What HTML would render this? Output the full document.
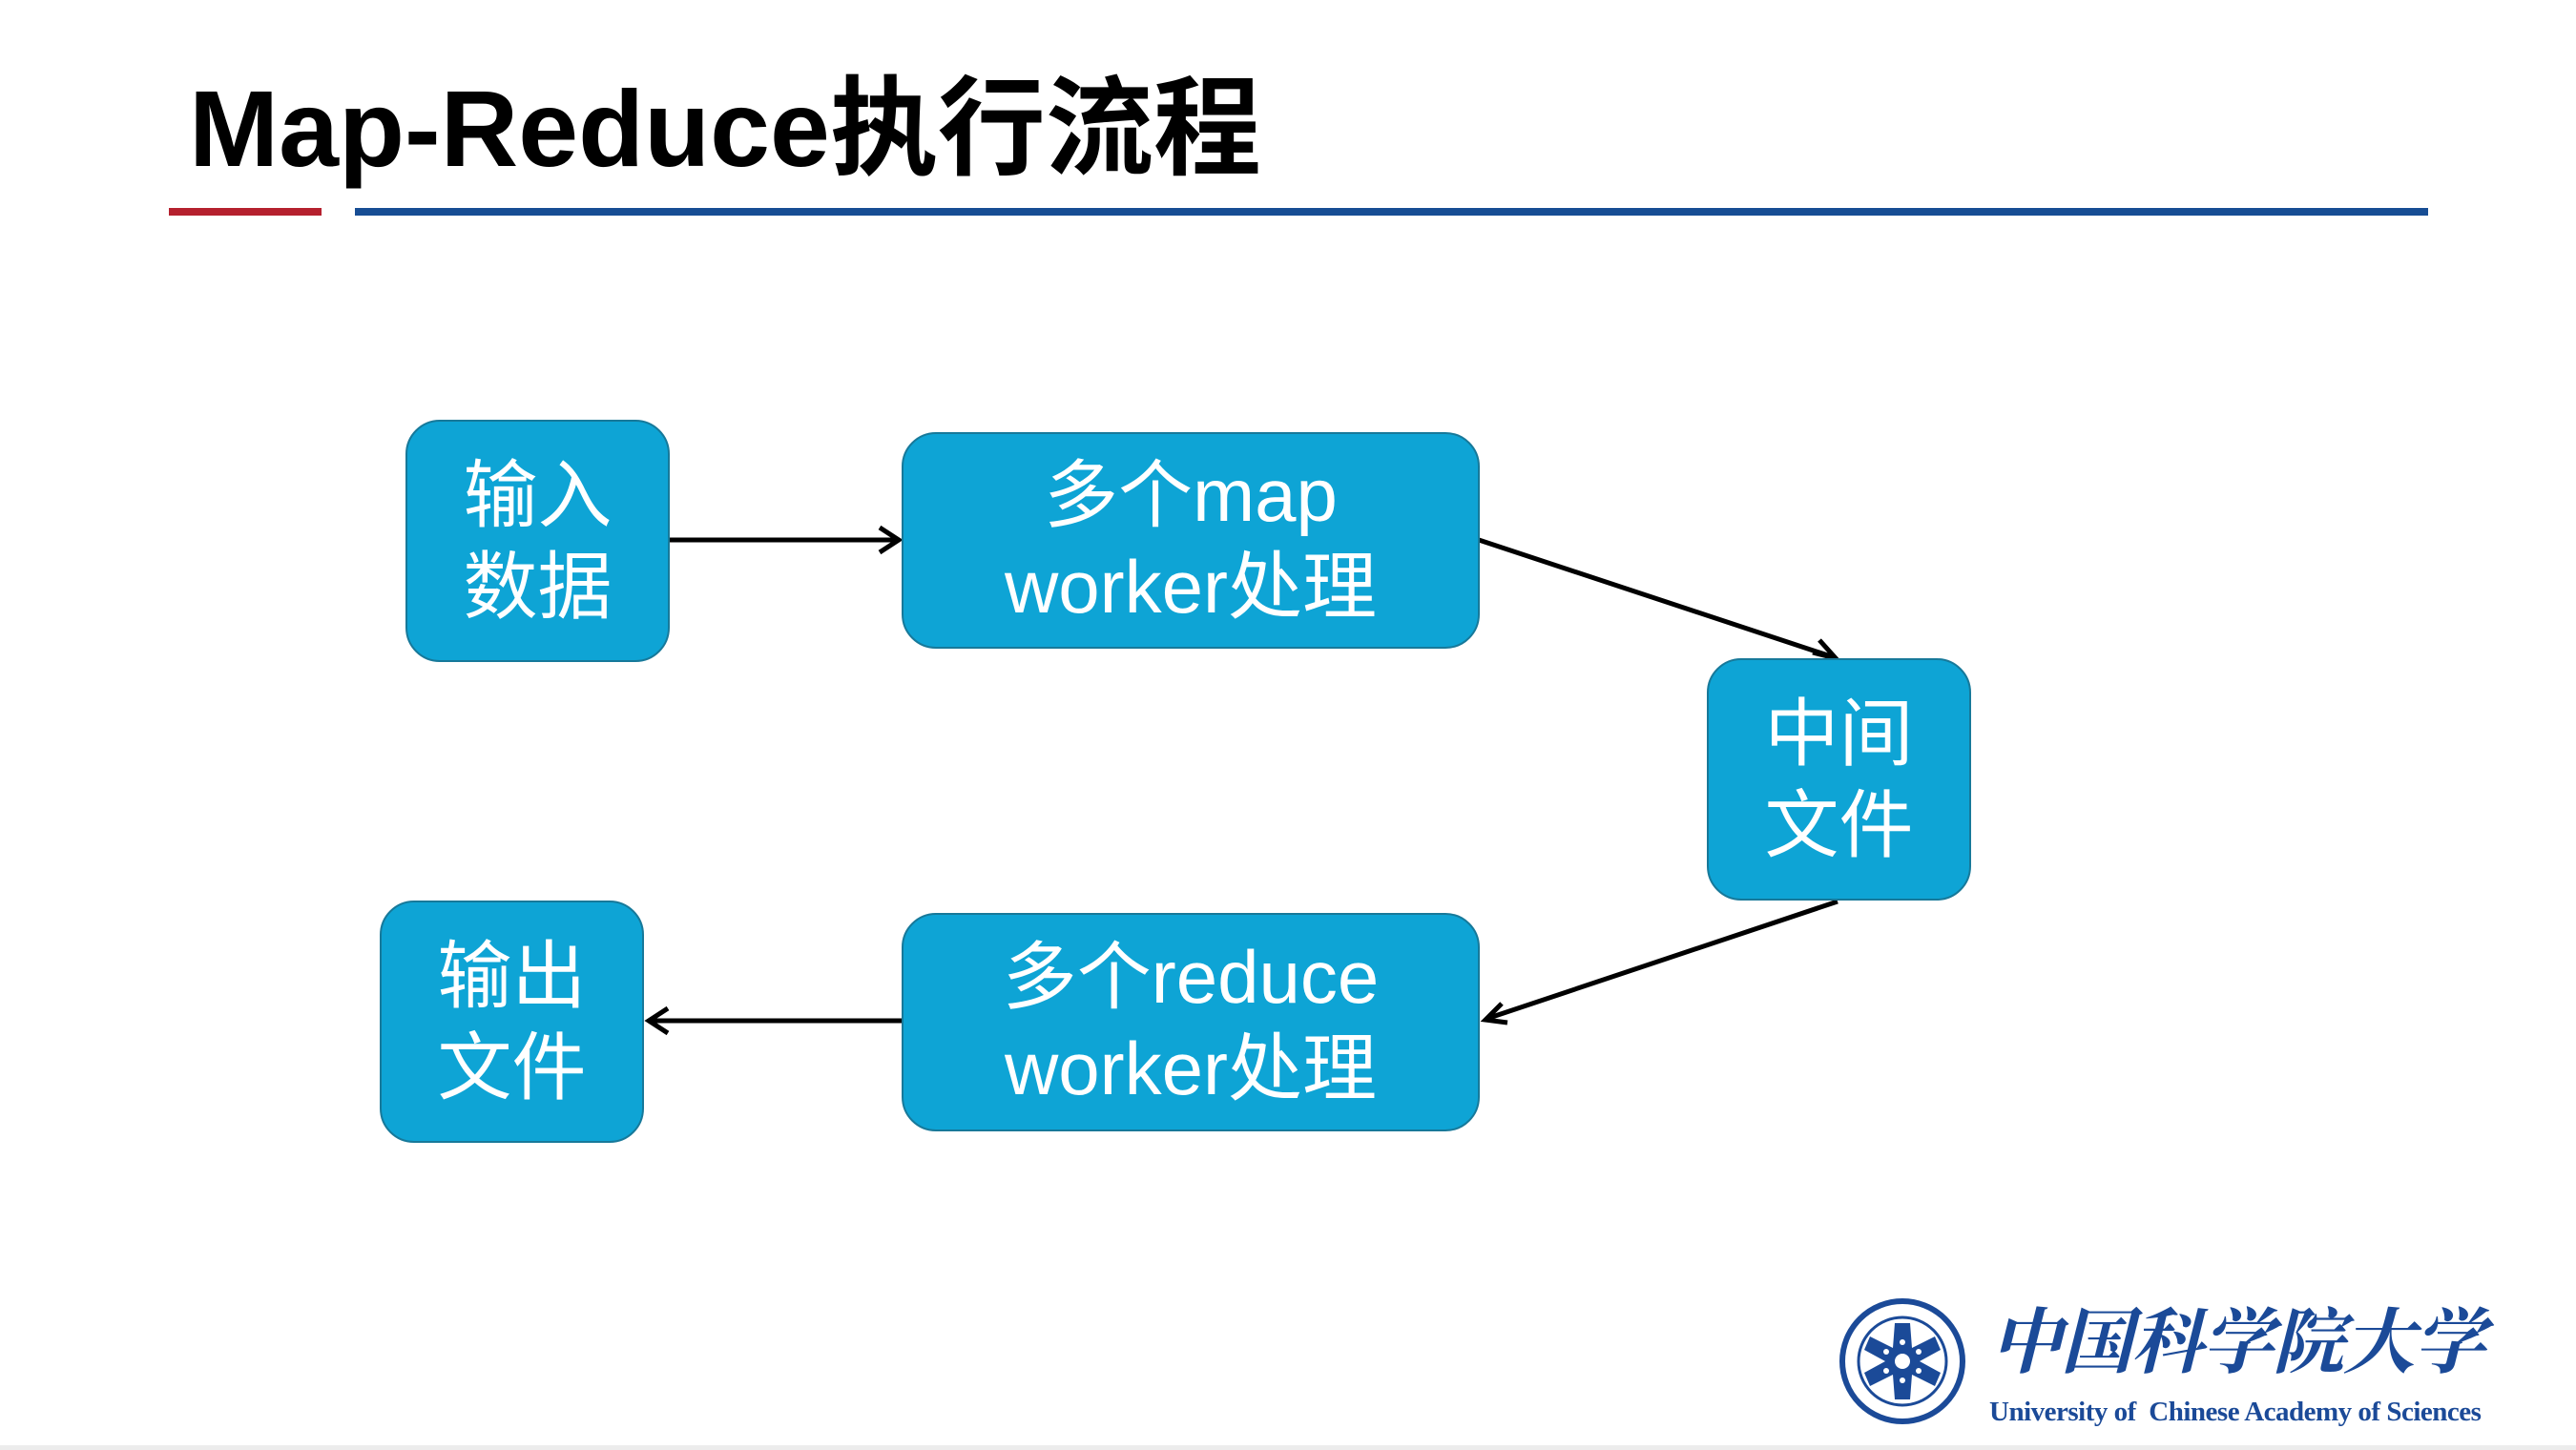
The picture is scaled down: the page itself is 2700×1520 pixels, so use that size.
<!DOCTYPE html>
<html><head><meta charset="utf-8"><style>
body{margin:0;width:2700px;height:1520px;background:#fff;position:relative;overflow:hidden;font-family:"Liberation Sans","Noto Sans CJK SC",sans-serif}
.t{position:absolute;left:198px;top:60px;font-size:113px;font-weight:bold;color:#000;line-height:150px;white-space:nowrap}
.b{position:absolute;background:#0ea4d5;border:2px solid #17799a;border-radius:36px;color:#fff;display:flex;align-items:center;justify-content:center;text-align:center;font-size:78px;line-height:96px;box-sizing:border-box}
</style></head><body>
<div class="t">Map-Reduce执行流程</div>
<div style="position:absolute;left:177px;top:218px;width:160px;height:8px;background:#b5202e"></div>
<div style="position:absolute;left:372px;top:218px;width:2173px;height:8px;background:#174d94"></div>
<svg width="2700" height="1520" style="position:absolute;left:0;top:0">
<g stroke="#000" stroke-width="5" fill="none">
<line x1="701" y1="566" x2="940" y2="566"/><polyline points="922,553 942,566 922,579"/>
<line x1="1550" y1="566" x2="1922" y2="689"/><polyline points="1900,684 1924,690 1907,671"/>
<line x1="1926" y1="945" x2="1558" y2="1068"/><polyline points="1574,1052 1557,1069 1580,1072"/>
<line x1="945" y1="1070" x2="682" y2="1070"/><polyline points="700,1057 680,1070 700,1083"/>
</g>
<circle cx="1994" cy="1427" r="63" fill="#fff" stroke="#1b4a98" stroke-width="6"/>
<circle cx="1994" cy="1427" r="46" fill="none" stroke="#1b4a98" stroke-width="3"/>
<g fill="#1b4a98" transform="translate(1994,1427)">
<path d="M-8,-40 L8,-40 L10,-14 L34,-26 L40,-12 L18,0 L40,12 L34,26 L10,14 L8,40 L-8,40 L-10,14 L-34,26 L-40,12 L-18,0 L-40,-12 L-34,-26 L-10,-14Z"/>
</g>
<circle cx="1994" cy="1427" r="8" fill="#fff"/>
<g fill="#fff"><circle cx="1994" cy="1407" r="3"/><circle cx="1994" cy="1447" r="3"/><circle cx="1977" cy="1417" r="3"/><circle cx="2011" cy="1417" r="3"/><circle cx="1977" cy="1437" r="3"/><circle cx="2011" cy="1437" r="3"/></g>
</svg>
<div class="b" style="left:425px;top:440px;width:277px;height:254px">输入<br>数据</div>
<div class="b" style="left:945px;top:453px;width:606px;height:227px">多个map<br>worker处理</div>
<div class="b" style="left:1789px;top:690px;width:277px;height:254px">中间<br>文件</div>
<div class="b" style="left:945px;top:957px;width:606px;height:229px">多个reduce<br>worker处理</div>
<div class="b" style="left:398px;top:944px;width:277px;height:254px">输出<br>文件</div>
<div style="position:absolute;left:2086px;top:1352px;font-family:'Noto Serif CJK SC',serif;font-weight:bold;font-style:italic;font-size:75px;line-height:100px;color:#1b4a98;letter-spacing:-1px;white-space:nowrap">中国科学院大学</div>
<div style="position:absolute;left:2085px;top:1464px;font-family:'Liberation Serif',serif;font-weight:bold;font-size:29px;color:#1b4a98;white-space:nowrap;letter-spacing:-0.5px">University of&nbsp; Chinese Academy of Sciences</div>
<div style="position:absolute;left:0;top:1515px;width:2700px;height:5px;background:#ececec"></div>
</body></html>
